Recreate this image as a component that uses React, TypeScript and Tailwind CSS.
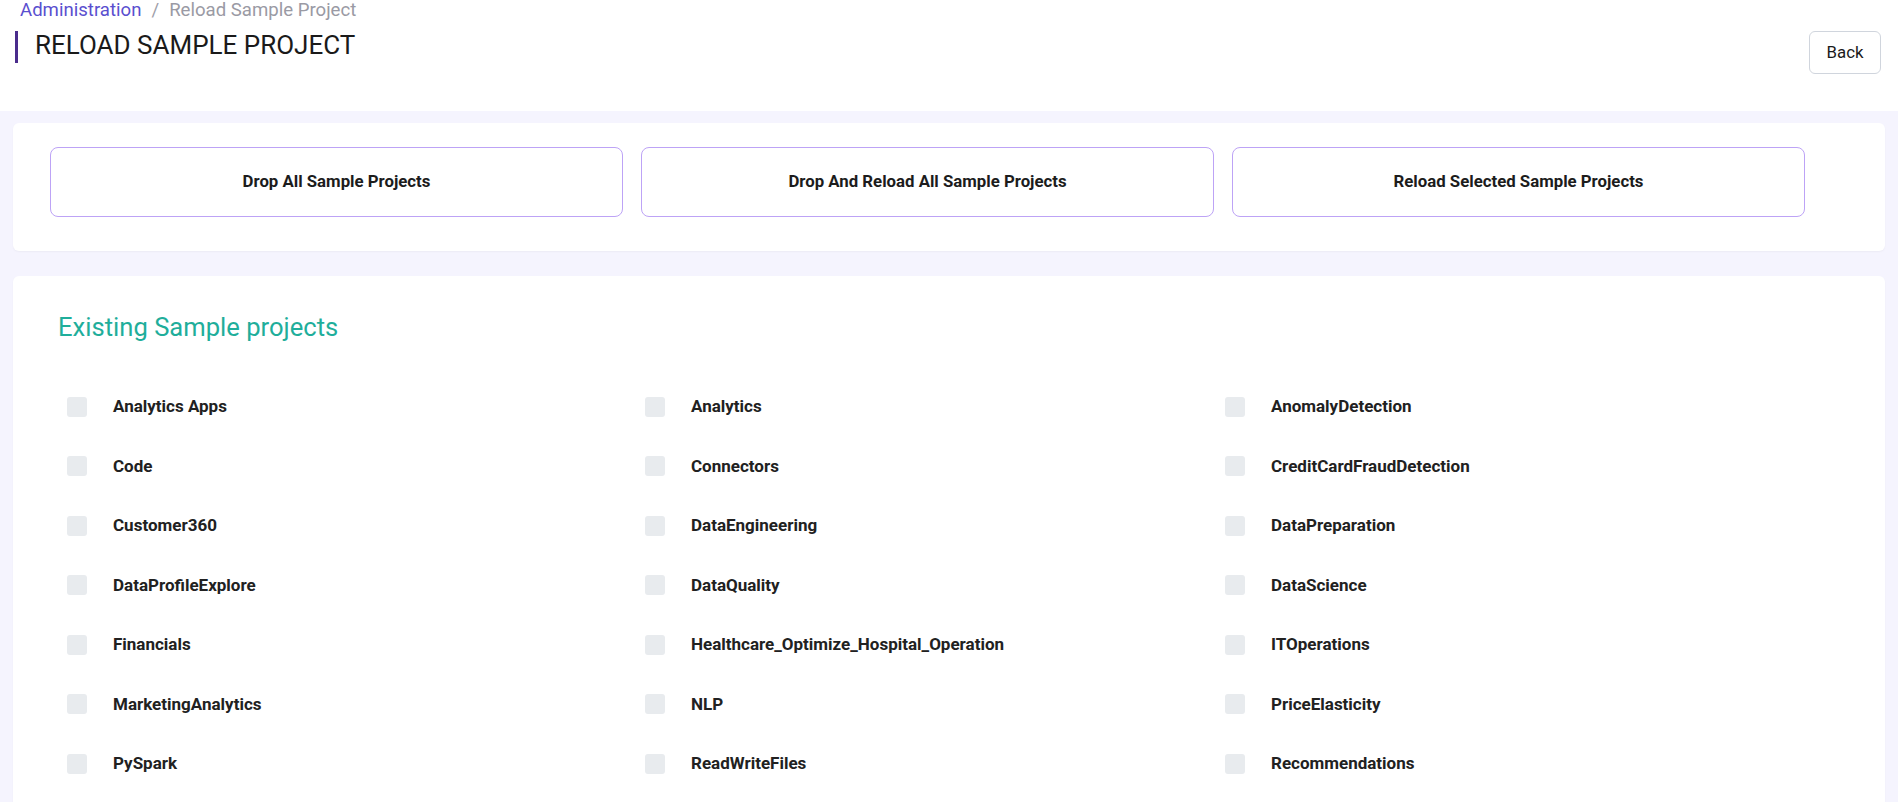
import React from "react";

const actions = [
  "Drop All Sample Projects",
  "Drop And Reload All Sample Projects",
  "Reload Selected Sample Projects",
];

const projects = [
  "Analytics Apps",
  "Analytics",
  "AnomalyDetection",
  "Code",
  "Connectors",
  "CreditCardFraudDetection",
  "Customer360",
  "DataEngineering",
  "DataPreparation",
  "DataProfileExplore",
  "DataQuality",
  "DataScience",
  "Financials",
  "Healthcare_Optimize_Hospital_Operation",
  "ITOperations",
  "MarketingAnalytics",
  "NLP",
  "PriceElasticity",
  "PySpark",
  "ReadWriteFiles",
  "Recommendations",
];

function ProjectCheck({ name }: { name: string }) {
  return (
    <label className="flex items-center h-[59.5px] gap-[26px] cursor-pointer">
      <span className="w-[20px] h-[20px] rounded-[3px] bg-[#e8ebee] shrink-0" />
      <span className="text-[17px] font-bold text-[#212121]">{name}</span>
    </label>
  );
}

export default function App() {
  return (
    <div className="min-h-screen bg-[#f5f4fe] font-['Roboto',sans-serif]">
      {/* page header */}
      <header className="bg-white h-[111px] flex justify-between pl-[15px] pr-[17px]">
        <div>
          <nav className="ml-[5px] text-[18.6px] leading-[20px] flex gap-[10px]">
            <a className="text-[#5a4fcf]">Administration</a>
            <span className="text-[#a0a0aa]">/</span>
            <span className="text-[#9a9aa4]">Reload Sample Project</span>
          </nav>
          <div className="mt-[11px] h-[32px] border-l-[3px] border-[#4a2c8c] flex items-center pl-[17px] pb-[4px]">
            <h1 className="text-[26px] leading-[28px] text-[#1a1a1a]">RELOAD SAMPLE PROJECT</h1>
          </div>
        </div>
        <button className="mt-[31px] w-[72px] h-[43px] border border-[#d0d5dd] rounded-[6px] text-[16.8px] text-[#1a1a1a] bg-white">
          Back
        </button>
      </header>

      <div className="px-[13px] pt-[12px]">
        {/* actions */}
        <div className="bg-white rounded-[6px] h-[128px] pl-[37px] pt-[24px] shadow-[0_1px_2px_rgba(0,0,0,0.04)]">
          <div className="flex gap-[18px]">
            {actions.map((a) => (
              <button
                key={a}
                className="w-[573px] h-[70px] border-[1.5px] border-[#bda3f6] rounded-[8px] text-[16.8px] font-bold text-[#1c1c1c] bg-white"
              >
                {a}
              </button>
            ))}
          </div>
        </div>

        {/* existing projects */}
        <div className="mt-[25px] bg-white rounded-[6px] pl-[45px] pr-[45px] pt-[35px] pb-[40px] shadow-[0_1px_2px_rgba(0,0,0,0.04)]">
          <h2 className="text-[25.6px] leading-[32px] text-[#1fae9b]">Existing Sample projects</h2>
          <div className="mt-[34px] pl-[9px] grid grid-cols-[578px_580px_1fr]">
            {projects.map((p) => (
              <ProjectCheck key={p} name={p} />
            ))}
          </div>
        </div>
      </div>
    </div>
  );
}
